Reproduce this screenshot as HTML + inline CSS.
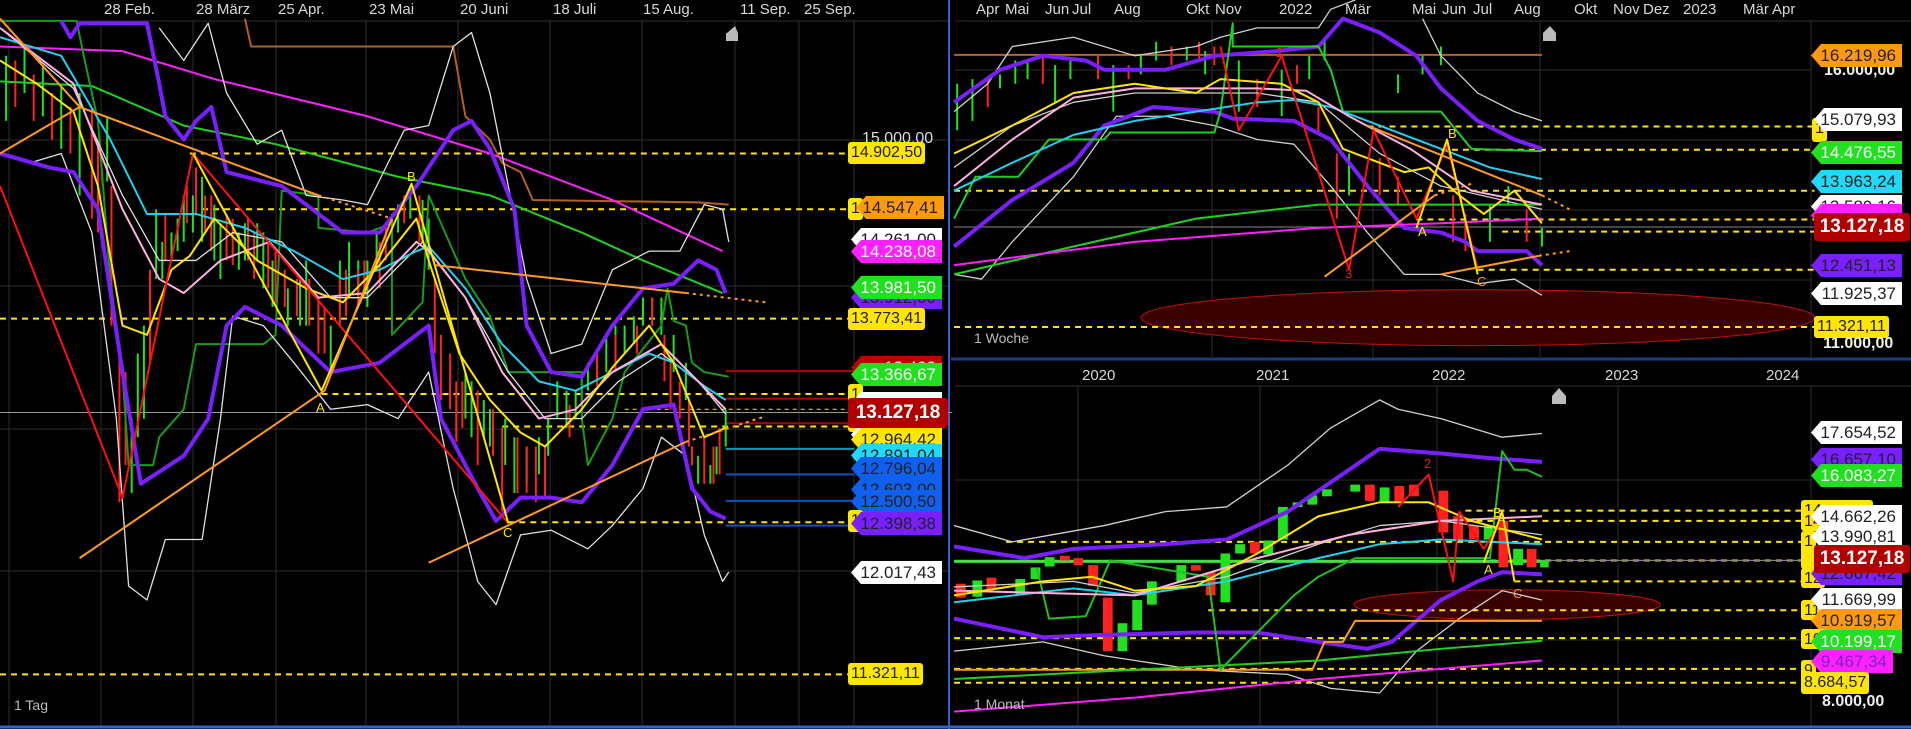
<!DOCTYPE html>
<html><head><meta charset="utf-8">
<style>
html,body{margin:0;padding:0;background:#000;}
body{width:1911px;height:729px;position:relative;overflow:hidden;font-family:"Liberation Sans Narrow","Liberation Sans",sans-serif;}
svg{position:absolute;left:0;top:0;}
.ax{position:absolute;color:#d8d8d8;font-size:15px;top:1px;white-space:nowrap;}
.lb{position:absolute;height:23px;line-height:23px;font-size:17px;text-align:right;padding-right:6px;box-sizing:border-box;clip-path:polygon(10px 0,100% 0,100% 100%,10px 100%,0 50%);white-space:nowrap;overflow:hidden;}
.yl{position:absolute;height:22px;line-height:22px;font-size:16px;background:#ffe600;color:#222;border-radius:3px;padding:0 3px;white-space:nowrap;}
.pl{position:absolute;font-size:16px;color:#eee;font-weight:bold;white-space:nowrap;}
.big{position:absolute;height:30px;line-height:30px;font-size:19px;font-weight:bold;color:#fff;background:#b00000;border-radius:3px;text-align:center;}
.tag{position:absolute;font-size:14px;color:#bbb;}
</style></head><body>
<svg width="1911" height="729" viewBox="0 0 1911 729">
<g stroke="#2e2e2e" stroke-width="1">
<line x1="0" y1="21" x2="949" y2="21"/>
<line x1="9" y1="21" x2="9" y2="727"/>
<line x1="101" y1="21" x2="101" y2="727"/><line x1="193" y1="21" x2="193" y2="727"/><line x1="276" y1="21" x2="276" y2="727"/><line x1="366" y1="21" x2="366" y2="727"/><line x1="458" y1="21" x2="458" y2="727"/><line x1="550" y1="21" x2="550" y2="727"/><line x1="642" y1="21" x2="642" y2="727"/><line x1="735" y1="21" x2="735" y2="727"/><line x1="799" y1="21" x2="799" y2="727"/><line x1="854" y1="21" x2="854" y2="727"/>
<line x1="0" y1="140" x2="949" y2="140"/><line x1="0" y1="286" x2="949" y2="286"/><line x1="0" y1="429" x2="949" y2="429"/><line x1="0" y1="571" x2="949" y2="571"/>
<line x1="955" y1="21" x2="1911" y2="21"/>
<line x1="1212" y1="21" x2="1212" y2="357"/><line x1="1373" y1="21" x2="1373" y2="357"/><line x1="1540" y1="21" x2="1540" y2="357"/><line x1="1811" y1="21" x2="1811" y2="357"/>
<line x1="955" y1="70" x2="1811" y2="70"/><line x1="955" y1="140" x2="1811" y2="140"/><line x1="955" y1="210" x2="1811" y2="210"/><line x1="955" y1="280" x2="1811" y2="280"/>
<line x1="955" y1="386" x2="1911" y2="386"/>
<line x1="1078" y1="386" x2="1078" y2="727"/><line x1="1260" y1="386" x2="1260" y2="727"/><line x1="1437" y1="386" x2="1437" y2="727"/><line x1="1618" y1="386" x2="1618" y2="727"/><line x1="1811" y1="386" x2="1811" y2="727"/>
<line x1="955" y1="480" x2="1811" y2="480"/><line x1="955" y1="560" x2="1811" y2="560"/><line x1="955" y1="640" x2="1811" y2="640"/>
</g>
<line x1="949" y1="0" x2="949" y2="729" stroke="#2a64d0" stroke-width="2"/>
<line x1="0" y1="727" x2="1911" y2="727" stroke="#2a64d0" stroke-width="3"/>
<line x1="951" y1="359" x2="1911" y2="359" stroke="#1a3d80" stroke-width="3"/>

<g transform="scale(0.6124,0.4651)" fill="none" stroke-linejoin="round">
<polyline vector-effect="non-scaling-stroke" stroke="#ffe600" stroke-width="2" stroke-dasharray="6,5" points="0,685 1385,685"/>
<polyline vector-effect="non-scaling-stroke" stroke="#ffe600" stroke-width="2" stroke-dasharray="6,5" points="310,330 1385,330"/>
<polyline vector-effect="non-scaling-stroke" stroke="#ffe600" stroke-width="2" stroke-dasharray="6,5" points="330,450 1385,450"/>
<polyline vector-effect="non-scaling-stroke" stroke="#ffe600" stroke-width="2" stroke-dasharray="6,5" points="525,847 1385,847"/>
<polyline vector-effect="non-scaling-stroke" stroke="#ffe600" stroke-width="2" stroke-dasharray="6,5" points="820,917 1385,917"/>
<polyline vector-effect="non-scaling-stroke" stroke="#ffe600" stroke-width="2" stroke-dasharray="6,5" points="830,1123 1385,1123"/>
<polyline vector-effect="non-scaling-stroke" stroke="#ffe600" stroke-width="2" stroke-dasharray="6,5" points="0,1450 1385,1450"/>
<polyline vector-effect="non-scaling-stroke" stroke="#ffe600" stroke-width="1" stroke-dasharray="4,4" points="1020,880 1385,880"/>
<polyline vector-effect="non-scaling-stroke" stroke="#999" stroke-width="1" points="0,887 1555,887"/>
<polyline vector-effect="non-scaling-stroke" stroke="#b00000" stroke-width="2" points="1185,798 1395,798"/>
<polyline vector-effect="non-scaling-stroke" stroke="#b00000" stroke-width="2" points="1185,857 1395,857"/>
<polyline vector-effect="non-scaling-stroke" stroke="#b00000" stroke-width="2" points="1185,910 1395,910"/>
<polyline vector-effect="non-scaling-stroke" stroke="#00a0b0" stroke-width="2" points="1185,965 1395,965"/>
<polyline vector-effect="non-scaling-stroke" stroke="#1050c0" stroke-width="2" points="1185,1020 1395,1020"/>
<polyline vector-effect="non-scaling-stroke" stroke="#1050c0" stroke-width="2" points="1185,1077 1395,1077"/>
<polyline vector-effect="non-scaling-stroke" stroke="#1050c0" stroke-width="2" points="1185,1130 1395,1130"/>
<path vector-effect="non-scaling-stroke" stroke-width="2" stroke="#20e020" d="M10,120V260 M40,100V200 M70,140V250 M100,180V320 M130,200V420 M175,250V390 M215,900V1060 M235,700V900 M255,450V600 M280,500V560 M300,420V520 M330,380V520 M360,480V600 M400,480V560 M430,500V620 M470,620V700 M500,560V700 M540,700V800 M570,520V640 M600,560V660 M640,460V560 M670,400V470 M700,470V580 M770,820V940 M800,880V960 M840,940V1060 M880,940V1020 M910,820V900 M940,840V900 M960,780V840 M990,720V800 M1020,700V760 M1050,640V700 M1080,640V720 M1120,780V860 M1160,1000V1040 M1185,880V960 M225,760V940 M265,520V600 M290,470V540 M315,420V500 M350,440V560 M390,500V580 M420,480V560 M445,560V660 M490,600V700 M520,640V740 M555,560V660 M585,560V640 M615,500V580 M650,440V500 M690,430V520 M760,800V900 M790,860V940 M825,900V1000 M860,960V1040 M895,900V980 M925,840V920 M950,800V880 M975,760V820 M1005,700V780 M1035,680V740 M1065,640V700 M1100,720V800 M1140,980V1040 M1170,960V1020"/>
<path vector-effect="non-scaling-stroke" stroke-width="2" stroke="#ff2020" d="M25,130V230 M55,160V260 M85,200V300 M115,230V330 M150,230V470 M195,740V1080 M245,580V780 M270,460V560 M320,360V460 M345,420V540 M380,470V570 M415,500V600 M450,540V650 M485,600V680 M520,640V760 M555,600V700 M585,580V660 M620,520V620 M685,420V520 M720,720V860 M745,820V950 M780,840V1000 M820,920V1100 M860,960V1060 M890,960V1070 M930,870V940 M975,760V830 M1005,720V800 M1040,700V760 M1065,640V700 M1095,780V880 M1110,820V900 M1130,960V1000 M1150,940V1040 M1175,920V1020 M160,300V500 M182,400V700 M205,800V1000 M305,400V480 M335,420V500 M370,460V560 M405,470V560 M438,520V620 M465,580V660 M505,600V700 M530,660V760 M565,580V680 M595,560V640 M630,480V560 M660,420V480 M710,600V760 M735,760V880 M755,820V920 M805,880V980 M845,940V1060 M875,960V1080 M1085,720V820 M1125,860V960 M1165,960V1040"/>
<polyline vector-effect="non-scaling-stroke" stroke="#b06020" stroke-width="2" points="400,40 410,100 740,100 760,250 800,300 820,350 850,370 870,430 1140,435 1190,440"/>
<polyline vector-effect="non-scaling-stroke" stroke="#ff20ff" stroke-width="2" points="0,100 200,110 350,170 600,250 800,330 1000,430 1180,540"/>
<polyline vector-effect="non-scaling-stroke" stroke="#20d020" stroke-width="2" points="0,175 150,185 300,270 450,310 650,380 800,420 950,500 1050,560 1180,630"/>
<polyline vector-effect="non-scaling-stroke" stroke="#1a9a1a" stroke-width="2" points="0,45 125,45 140,140 160,260 180,600 200,800 210,1000 250,1000 260,940 300,880 320,740 430,740 450,720 460,410 520,420 520,490 600,500 640,480 640,720 690,650 700,420 720,480 760,600 800,680 830,800 950,800 950,900 960,1000 1000,900 1020,800 1080,700 1090,620 1100,690 1120,700 1130,780 1150,800 1190,810"/>
<polyline vector-effect="non-scaling-stroke" stroke="#e0e0e0" stroke-width="1.3" points="260,60 300,130 340,50 370,200 420,310 460,280 500,420 560,430 600,440 660,280 700,270 740,100 770,70 800,200 830,400 860,600 900,760 950,740 1000,580 1060,540 1110,540 1150,440 1180,450 1190,520"/>
<polyline vector-effect="non-scaling-stroke" stroke="#e0e0e0" stroke-width="1.3" points="0,330 50,350 100,330 150,500 190,900 210,1260 240,1290 270,1160 330,1160 360,900 380,680 430,700 480,780 540,880 600,870 650,900 700,800 740,1050 780,1250 810,1300 850,1150 900,1140 960,1180 1000,1130 1050,1050 1080,940 1120,980 1150,1150 1180,1250 1190,1230"/>
<polyline vector-effect="non-scaling-stroke" stroke="#e0e0e0" stroke-width="1.3" points="0,60 120,190 200,420 260,560 320,560 380,500 460,520 540,640 600,640 690,520 760,640 830,800 890,900 950,900 1010,820 1080,760 1140,820 1185,890"/>
<polyline vector-effect="non-scaling-stroke" stroke="#7a1fff" stroke-width="4" points="100,45 115,80 130,50 240,50 260,180 270,250 300,300 320,260 345,230 370,370 460,400 520,460 560,500 620,500 680,400 740,280 770,260 800,320 840,450 860,700 900,800 950,810 1000,700 1050,620 1100,610 1140,560 1170,580 1185,630"/>
<polyline vector-effect="non-scaling-stroke" stroke="#7a1fff" stroke-width="4" points="0,330 80,360 120,370 160,450 200,800 230,1040 300,980 340,900 370,700 400,660 460,700 540,800 620,780 680,720 700,700 720,900 780,1050 810,1120 850,1070 900,1070 950,1080 1000,1000 1050,880 1100,870 1130,1050 1160,1100 1185,1115"/>
<polyline vector-effect="non-scaling-stroke" stroke="#20d0f0" stroke-width="2" points="0,80 100,120 180,300 240,460 320,460 400,490 480,540 560,600 620,580 680,540 700,530 760,620 820,740 880,820 940,840 1000,800 1060,760 1100,780 1150,830 1185,860"/>
<polyline vector-effect="non-scaling-stroke" stroke="#ffb0e0" stroke-width="2" points="0,60 120,180 200,450 260,600 300,630 360,560 440,520 520,640 600,630 680,520 700,540 760,640 820,800 880,900 940,880 1000,800 1080,740 1140,820 1185,880"/>
<polyline vector-effect="non-scaling-stroke" stroke="#ffe600" stroke-width="2" points="0,130 60,180 120,240 160,400 200,700 240,720 280,580 310,550 350,470 420,560 500,620 560,650 620,570 680,470 700,560 750,760 800,860 850,930 890,960 950,880 1000,790 1060,700 1100,780 1150,940 1185,920"/>
<polyline vector-effect="non-scaling-stroke" stroke="#ff1010" stroke-width="2" points="0,400 200,1070 315,330 830,1125"/>
<polyline vector-effect="non-scaling-stroke" stroke="#ffe600" stroke-width="2" points="315,330 525,840 672,395 830,1125"/>
<polyline vector-effect="non-scaling-stroke" stroke="#ff9a20" stroke-width="2" points="0,330 130,230"/>
<polyline vector-effect="non-scaling-stroke" stroke="#ff9a20" stroke-width="2" points="130,1200 530,840 640,470"/>
<polyline vector-effect="non-scaling-stroke" stroke="#ff9a20" stroke-width="2" points="0,40 130,230 520,420"/>
<polyline vector-effect="non-scaling-stroke" stroke="#ff9a20" stroke-width="2" stroke-dasharray="3,4" points="520,420 640,470"/>
<polyline vector-effect="non-scaling-stroke" stroke="#ff9a20" stroke-width="2" points="700,1210 1120,950"/>
<polyline vector-effect="non-scaling-stroke" stroke="#ff9a20" stroke-width="2" stroke-dasharray="3,4" points="1120,950 1250,895"/>
<polyline vector-effect="non-scaling-stroke" stroke="#ff9a20" stroke-width="2" points="710,570 1120,630"/>
<polyline vector-effect="non-scaling-stroke" stroke="#ff9a20" stroke-width="2" stroke-dasharray="3,4" points="1120,630 1250,650"/>
</g>
<polygon points="727,33 735,26 738,33" fill="#bbb"/><rect x="726" y="33" width="12" height="8" fill="#bbb"/>
<text x="316" y="412" fill="#ffe600" font-size="13" font-family="Liberation Sans">A</text>
<text x="407" y="181" fill="#ffe600" font-size="13" font-family="Liberation Sans">B</text>
<text x="503" y="537" fill="#ffe600" font-size="13" font-family="Liberation Sans">C</text>

<g transform="translate(951,0) scale(0.6124,0.4651)" fill="none" stroke-linejoin="round">
<ellipse vector-effect="non-scaling-stroke" cx="860" cy="683" rx="550" ry="60" fill="#3a0000" stroke="#c01010" stroke-width="1"/>
<polyline vector-effect="non-scaling-stroke" stroke="#c06020" stroke-width="2" points="5,118 965,118"/>
<g stroke="#ffe600" stroke-width="2" stroke-dasharray="6,5">
<polyline vector-effect="non-scaling-stroke" points="680,272 1410,272"/>
<polyline vector-effect="non-scaling-stroke" points="800,322 1410,322"/>
<polyline vector-effect="non-scaling-stroke" points="5,410 1410,410"/>
<polyline vector-effect="non-scaling-stroke" points="760,472 1410,472"/>
<polyline vector-effect="non-scaling-stroke" points="900,498 1410,498"/>
<polyline vector-effect="non-scaling-stroke" points="860,580 1410,580"/>
<polyline vector-effect="non-scaling-stroke" points="5,703 1410,703"/>
</g>
<polyline vector-effect="non-scaling-stroke" stroke="#888" stroke-width="1" points="5,488 1410,488"/>
<path vector-effect="non-scaling-stroke" stroke="#20e020" stroke-width="2" d="M10,180V280 M35,170V260 M80,160V190 M105,130V180 M125,130V170 M170,140V220 M195,130V170 M265,140V240 M310,120V160 M335,90V130 M385,100V130 M415,110V160 M470,130V240 M540,150V250 M585,120V170 M610,80V130 M650,330V420 M730,160V200 M770,120V160 M800,100V140 M880,440V520 M910,400V440 M965,490V530"/>
<path vector-effect="non-scaling-stroke" stroke="#ff2020" stroke-width="2" d="M60,170V230 M150,120V180 M240,120V170 M290,140V170 M360,100V140 M405,90V130 M430,100V140 M500,170V230 M565,140V180 M600,230V290 M630,330V470 M700,340V420 M730,380V440 M820,420V520 M840,460V540 M940,450V520"/>
<polyline vector-effect="non-scaling-stroke" stroke="#d0d0d0" stroke-width="1.3" points="5,240 60,180 100,100 200,80 300,120 400,100 440,80 500,60 600,60 620,20 660,0"/>
<polyline vector-effect="non-scaling-stroke" stroke="#d0d0d0" stroke-width="1.3" points="770,40 800,120 860,200 920,240 965,260"/>
<polyline vector-effect="non-scaling-stroke" stroke="#d0d0d0" stroke-width="1.3" points="5,590 50,600 100,520 200,380 270,250 350,250 430,270 500,300 560,310 620,400 680,500 740,590 800,590 860,610 920,600 965,635"/>
<polyline vector-effect="non-scaling-stroke" stroke="#d0d0d0" stroke-width="1.3" points="5,360 100,270 200,220 300,200 500,200 600,220 700,330 800,400 965,450"/>
<polyline vector-effect="non-scaling-stroke" stroke="#7a1fff" stroke-width="4" points="5,220 80,150 150,120 220,130 250,150 350,150 430,120 530,110 600,100 640,40 700,70 760,120 800,190 860,260 920,300 965,320"/>
<polyline vector-effect="non-scaling-stroke" stroke="#7a1fff" stroke-width="4" points="5,530 100,430 200,350 250,270 330,230 430,240 460,255 560,260 620,300 680,400 740,490 800,500 840,520 860,540 940,540 965,570"/>
<polyline vector-effect="non-scaling-stroke" stroke="#20d020" stroke-width="2" points="5,470 40,380 110,380 160,300 250,300 260,285 430,285 440,240 460,50 460,100 600,100 620,150 640,240 800,240 850,320 965,325"/>
<polyline vector-effect="non-scaling-stroke" stroke="#20d020" stroke-width="2" points="5,590 200,530 400,470 600,440 800,440 965,440"/>
<polyline vector-effect="non-scaling-stroke" stroke="#ff20ff" stroke-width="2" points="5,570 300,520 600,490 800,480 965,470"/>
<polyline vector-effect="non-scaling-stroke" stroke="#20d0f0" stroke-width="2" points="5,410 100,350 200,290 300,260 400,240 500,220 560,215 620,230 700,270 800,320 880,360 965,385"/>
<polyline vector-effect="non-scaling-stroke" stroke="#ffb0e0" stroke-width="2" points="5,400 100,300 200,210 300,190 500,190 580,195 650,250 750,320 850,410 965,440"/>
<polyline vector-effect="non-scaling-stroke" stroke="#ffe600" stroke-width="2" points="5,330 100,270 200,200 300,180 400,200 440,170 540,180 600,220 640,320 700,350 740,370 780,360 830,420 870,460 920,410 965,480"/>
<polyline vector-effect="non-scaling-stroke" stroke="#ff1010" stroke-width="2" points="440,100 470,280 540,120 650,580 690,280 760,470 810,310 860,580"/>
<polyline vector-effect="non-scaling-stroke" stroke="#ffe600" stroke-width="2" points="760,490 810,300 860,590"/>
<polyline vector-effect="non-scaling-stroke" stroke="#ff9a20" stroke-width="2" points="610,595 790,420"/>
<polyline vector-effect="non-scaling-stroke" stroke="#ff9a20" stroke-width="2" points="800,590 960,550"/>
<polyline vector-effect="non-scaling-stroke" stroke="#ff9a20" stroke-width="2" points="680,270 965,420"/>
<polyline vector-effect="non-scaling-stroke" stroke="#ff9a20" stroke-width="2" stroke-dasharray="3,4" points="790,420 850,395"/>
<polyline vector-effect="non-scaling-stroke" stroke="#ff9a20" stroke-width="2" stroke-dasharray="3,4" points="960,550 1010,540"/>
<polyline vector-effect="non-scaling-stroke" stroke="#ff9a20" stroke-width="2" stroke-dasharray="3,4" points="965,420 1010,450"/>
</g>
<polygon points="1543,33 1550,26 1556,33" fill="#bbb"/><rect x="1543" y="33" width="13" height="8" fill="#bbb"/>
<text x="1276" y="57" fill="#e02020" font-size="13" font-family="Liberation Sans">2</text>
<text x="1345" y="278" fill="#e02020" font-size="13" font-family="Liberation Sans">3</text>
<text x="1418" y="236" fill="#ffe600" font-size="13" font-family="Liberation Sans">A</text>
<text x="1448" y="138" fill="#ffe600" font-size="13" font-family="Liberation Sans">B</text>
<text x="1477" y="286" fill="#ff9a20" font-size="13" font-family="Liberation Sans">C</text>

<g transform="translate(951,0) scale(0.6124,0.4651)" fill="none" stroke-linejoin="round">
<ellipse vector-effect="non-scaling-stroke" cx="908" cy="1300" rx="250" ry="32" fill="#3a0000" stroke="#c01010" stroke-width="1"/>
<g stroke="#ffe600" stroke-width="2" stroke-dasharray="6,5">
<polyline vector-effect="non-scaling-stroke" points="840,1098 1390,1098"/>
<polyline vector-effect="non-scaling-stroke" points="840,1120 1390,1120"/>
<polyline vector-effect="non-scaling-stroke" points="90,1165 1390,1165"/>
<polyline vector-effect="non-scaling-stroke" points="880,1205 1390,1205"/>
<polyline vector-effect="non-scaling-stroke" points="920,1250 1390,1250"/>
<polyline vector-effect="non-scaling-stroke" points="420,1312 1390,1312"/>
<polyline vector-effect="non-scaling-stroke" points="5,1372 1390,1372"/>
<polyline vector-effect="non-scaling-stroke" points="5,1438 1390,1438"/>
<polyline vector-effect="non-scaling-stroke" points="5,1468 1390,1468"/>
</g>
<polyline vector-effect="non-scaling-stroke" stroke="#888" stroke-width="1" points="5,1205 1390,1205"/>
<polyline vector-effect="non-scaling-stroke" stroke="#40e040" stroke-width="3" points="5,1207 965,1207"/>
<g stroke-width="1">
<rect x="8" y="1255" width="16" height="30" fill="#ff2020"/><rect x="35" y="1248" width="16" height="35" fill="#20e020"/><rect x="58" y="1242" width="16" height="25" fill="#ff2020"/><rect x="105" y="1245" width="16" height="32" fill="#20e020"/><rect x="130" y="1220" width="16" height="25" fill="#20e020"/><rect x="153" y="1198" width="16" height="20" fill="#20e020"/><rect x="178" y="1195" width="16" height="10" fill="#ff2020"/><rect x="200" y="1200" width="16" height="15" fill="#ff2020"/><rect x="224" y="1215" width="16" height="45" fill="#ff2020"/><rect x="248" y="1285" width="16" height="115" fill="#ff2020"/><rect x="272" y="1340" width="16" height="60" fill="#20e020"/><rect x="296" y="1290" width="16" height="65" fill="#20e020"/><rect x="320" y="1250" width="16" height="50" fill="#20e020"/><rect x="368" y="1215" width="16" height="35" fill="#20e020"/><rect x="392" y="1215" width="16" height="12" fill="#ff2020"/><rect x="416" y="1230" width="16" height="50" fill="#ff2020"/><rect x="440" y="1190" width="16" height="105" fill="#20e020"/><rect x="464" y="1170" width="16" height="20" fill="#20e020"/><rect x="488" y="1165" width="16" height="25" fill="#ff2020"/><rect x="510" y="1162" width="16" height="30" fill="#20e020"/><rect x="534" y="1090" width="16" height="70" fill="#20e020"/><rect x="558" y="1080" width="16" height="10" fill="#20e020"/><rect x="582" y="1065" width="16" height="20" fill="#20e020"/><rect x="606" y="1052" width="16" height="15" fill="#20e020"/><rect x="652" y="1042" width="16" height="15" fill="#20e020"/><rect x="676" y="1042" width="16" height="35" fill="#ff2020"/><rect x="700" y="1048" width="16" height="30" fill="#20e020"/><rect x="724" y="1045" width="16" height="35" fill="#ff2020"/><rect x="748" y="1042" width="16" height="25" fill="#ff2020"/><rect x="796" y="1055" width="16" height="90" fill="#ff2020"/><rect x="820" y="1110" width="16" height="50" fill="#ff2020"/><rect x="846" y="1130" width="16" height="30" fill="#ff2020"/><rect x="870" y="1130" width="16" height="30" fill="#20e020"/><rect x="894" y="1120" width="16" height="100" fill="#ff2020"/><rect x="918" y="1180" width="16" height="35" fill="#20e020"/><rect x="940" y="1180" width="16" height="40" fill="#ff2020"/><rect x="962" y="1205" width="14" height="15" fill="#20e020"/>
</g>
<polyline vector-effect="non-scaling-stroke" stroke="#d0d0d0" stroke-width="1.3" points="5,1130 100,1165 250,1130 350,1100 450,1090 550,1000 620,920 700,860 730,880 800,900 900,940 965,932"/>
<polyline vector-effect="non-scaling-stroke" stroke="#d0d0d0" stroke-width="1.3" points="5,1400 150,1380 250,1410 400,1440 550,1450 620,1480 700,1490 760,1400 830,1330 900,1270 965,1290"/>
<polyline vector-effect="non-scaling-stroke" stroke="#d0d0d0" stroke-width="1.3" points="5,1262 200,1250 300,1275 450,1240 600,1170 700,1130 800,1120 965,1150"/>
<polyline vector-effect="non-scaling-stroke" stroke="#7a1fff" stroke-width="4" points="5,1175 120,1200 200,1180 350,1170 450,1160 550,1100 700,965 800,975 880,985 965,993"/>
<polyline vector-effect="non-scaling-stroke" stroke="#7a1fff" stroke-width="4" points="5,1330 150,1370 250,1365 400,1360 500,1360 600,1380 680,1395 720,1380 800,1290 860,1250 900,1230 965,1235"/>
<polyline vector-effect="non-scaling-stroke" stroke="#ff9a20" stroke-width="2" points="5,1440 590,1440 610,1380 640,1380 660,1335 965,1335"/>
<polyline vector-effect="non-scaling-stroke" stroke="#20d020" stroke-width="2" points="5,1460 300,1440 600,1420 800,1395 965,1378"/>
<polyline vector-effect="non-scaling-stroke" stroke="#ff20ff" stroke-width="2" points="5,1530 300,1500 600,1460 965,1420"/>
<polyline vector-effect="non-scaling-stroke" stroke="#20c020" stroke-width="2" points="140,1220 160,1330 220,1325 260,1205 420,1240 440,1440 500,1360 560,1280 600,1240 660,1200 880,1200 900,970 920,1010 940,1010 965,1025"/>
<polyline vector-effect="non-scaling-stroke" stroke="#20d0f0" stroke-width="2" points="5,1295 200,1265 300,1280 450,1250 600,1200 700,1170 800,1160 965,1170"/>
<polyline vector-effect="non-scaling-stroke" stroke="#ffb0e0" stroke-width="2" points="5,1270 300,1280 500,1200 650,1150 800,1120 965,1110"/>
<polyline vector-effect="non-scaling-stroke" stroke="#ffe600" stroke-width="2" points="5,1280 150,1250 230,1240 300,1270 400,1260 500,1190 600,1110 700,1080 780,1080 850,1120 965,1160"/>
<polyline vector-effect="non-scaling-stroke" stroke="#ff1010" stroke-width="2" points="730,1090 780,1020 820,1250 830,1100 870,1180 900,1120"/>
<polyline vector-effect="non-scaling-stroke" stroke="#ffe600" stroke-width="2" points="870,1210 900,1100 920,1250"/>
</g>
<polygon points="1552,396 1559,388 1566,396" fill="#bbb"/><rect x="1552" y="396" width="14" height="8" fill="#bbb"/>
<text x="1424" y="468" fill="#e02020" font-size="13" font-family="Liberation Sans">2</text>
<text x="1493" y="517" fill="#ffe600" font-size="13" font-family="Liberation Sans">B</text>
<text x="1484" y="574" fill="#ffe600" font-size="13" font-family="Liberation Sans">A</text>
<text x="1513" y="598" fill="#ff9a20" font-size="13" font-family="Liberation Sans">C</text>
</svg>

<div class="ax" style="left:104px">28 Feb.</div>
<div class="ax" style="left:196px">28 März</div>
<div class="ax" style="left:278px">25 Apr.</div>
<div class="ax" style="left:369px">23 Mai</div>
<div class="ax" style="left:460px">20 Juni</div>
<div class="ax" style="left:553px">18 Juli</div>
<div class="ax" style="left:643px">15 Aug.</div>
<div class="ax" style="left:740px">11 Sep.</div>
<div class="ax" style="left:804px">25 Sep.</div>
<div class="tag" style="left:14px;top:697px">1 Tag</div>

<div class="pl" style="left:862px;top:130px;color:#ddd;font-weight:normal">15.000,00</div>
<div class="yl" style="left:848px;top:142px">14.902,50</div>
<div class="yl" style="left:848px;top:198px">1</div>
<div class="lb" style="left:856px;top:196px;width:88px;background:#ff9a10;color:#222">14.547,41</div>
<div class="lb" style="left:851px;top:228px;width:91px;background:#fff;color:#222">14.261,00</div>
<div class="lb" style="left:851px;top:240px;width:91px;background:#ff20ff;color:#fff">14.238,08</div>
<div class="lb" style="left:851px;top:286px;width:91px;background:#7a1fff;color:#222">13.912,00</div>
<div class="lb" style="left:851px;top:276px;width:91px;background:#20e020;color:#fff">13.981,50</div>
<div class="yl" style="left:848px;top:308px">13.773,41</div>
<div class="lb" style="left:851px;top:356px;width:91px;background:#c00000;color:#fff">13.400</div>
<div class="lb" style="left:851px;top:363px;width:91px;background:#20e020;color:#fff">13.366,67</div>
<div class="yl" style="left:848px;top:384px;height:48px">1</div>
<div class="lb" style="left:851px;top:392px;width:91px;background:#fff;color:#222"> </div>
<div class="lb" style="left:851px;top:423px;width:91px;background:#fff;color:#222"> </div>
<div class="lb" style="left:851px;top:428px;width:91px;background:#ffe600;color:#222">12.964,42</div>
<div class="lb" style="left:851px;top:444px;width:91px;background:#20d8f8;color:#222">12.891,04</div>
<div class="lb" style="left:851px;top:457px;width:91px;background:#1060f0;color:#222">12.796,04</div>
<div class="lb" style="left:851px;top:478px;width:91px;background:#1060f0;color:#222">12.603,00</div>
<div class="lb" style="left:851px;top:490px;width:91px;background:#1060f0;color:#222">12.500,50</div>
<div class="yl" style="left:848px;top:510px">1</div>
<div class="lb" style="left:851px;top:512px;width:91px;background:#7a1fff;color:#222">12.398,38</div>
<div class="big" style="left:848px;top:398px;width:100px">13.127,18</div>
<div class="lb" style="left:851px;top:561px;width:91px;background:#fff;color:#222">12.017,43</div>
<div class="yl" style="left:848px;top:663px">11.321,11</div>

<div class="ax" style="left:976px">Apr</div><div class="ax" style="left:1005px">Mai</div><div class="ax" style="left:1045px">Jun</div><div class="ax" style="left:1072px">Jul</div><div class="ax" style="left:1114px">Aug</div><div class="ax" style="left:1186px">Okt</div><div class="ax" style="left:1215px">Nov</div><div class="ax" style="left:1279px">2022</div><div class="ax" style="left:1345px">Mär</div><div class="ax" style="left:1412px">Mai</div><div class="ax" style="left:1442px">Jun</div><div class="ax" style="left:1473px">Jul</div><div class="ax" style="left:1514px">Aug</div><div class="ax" style="left:1574px">Okt</div><div class="ax" style="left:1613px">Nov</div><div class="ax" style="left:1643px">Dez</div><div class="ax" style="left:1683px">2023</div><div class="ax" style="left:1743px">Mär</div><div class="ax" style="left:1772px">Apr</div>
<div class="tag" style="left:974px;top:330px">1 Woche</div>
<div class="pl" style="left:1824px;top:62px;">16.000,00</div>
<div class="lb" style="left:1811px;top:44px;width:91px;background:#ff9a10;color:#222">16.219,96</div>
<div class="yl" style="left:1812px;top:118px;height:24px">1</div>
<div class="lb" style="left:1814px;top:108px;width:88px;background:#fff;color:#222">15.079,93</div>
<div class="lb" style="left:1811px;top:141px;width:91px;background:#7a1fff;color:#222"> </div>
<div class="lb" style="left:1811px;top:141px;width:91px;background:#20e020;color:#fff">14.476,55</div>
<div class="lb" style="left:1811px;top:170px;width:91px;background:#20d8f8;color:#222">13.963,24</div>
<div class="lb" style="left:1811px;top:195px;width:91px;background:#fff;color:#222">13.589,16</div>
<div class="lb" style="left:1811px;top:204px;width:91px;background:#ff20ff;color:#fff"> </div>
<div class="big" style="left:1814px;top:213px;width:96px;height:28px;line-height:28px">13.127,18</div>
<div class="lb" style="left:1811px;top:254px;width:91px;background:#7a1fff;color:#222">12.451,13</div>
<div class="lb" style="left:1811px;top:282px;width:91px;background:#fff;color:#222">11.925,37</div>
<div class="yl" style="left:1814px;top:316px">11.321,11</div>
<div class="pl" style="left:1823px;top:335px;">11.000,00</div>

<div class="ax" style="left:1082px;top:367px">2020</div>
<div class="ax" style="left:1256px;top:367px">2021</div>
<div class="ax" style="left:1432px;top:367px">2022</div>
<div class="ax" style="left:1605px;top:367px">2023</div>
<div class="ax" style="left:1766px;top:367px">2024</div>
<div class="tag" style="left:974px;top:696px">1 Monat</div>
<div class="lb" style="left:1811px;top:421px;width:91px;background:#fff;color:#222">17.654,52</div>
<div class="lb" style="left:1811px;top:448px;width:91px;background:#7a1fff;color:#222">16.657,10</div>
<div class="lb" style="left:1811px;top:464px;width:91px;background:#20e020;color:#fff">16.083,27</div>
<div class="yl" style="left:1801px;top:500px;width:66px;height:20px">14</div>
<div class="yl" style="left:1801px;top:511px;height:20px">14</div>
<div class="lb" style="left:1811px;top:505px;width:91px;background:#fff;color:#222">14.662,26</div>
<div class="yl" style="left:1801px;top:531px;height:38px">1</div>
<div class="lb" style="left:1811px;top:525px;width:91px;background:#fff;color:#222">13.990,81</div>
<div class="yl" style="left:1801px;top:568px;height:20px">12</div>
<div class="lb" style="left:1811px;top:562px;width:91px;background:#7a1fff;color:#222">12.667,42</div>
<div class="big" style="left:1814px;top:545px;width:96px;height:28px;line-height:28px">13.127,18</div>
<div class="yl" style="left:1801px;top:600px;height:20px">11</div>
<div class="lb" style="left:1811px;top:588px;width:91px;background:#fff;color:#222">11.669,99</div>
<div class="lb" style="left:1811px;top:609px;width:91px;background:#ff9a10;color:#222">10.919,57</div>
<div class="yl" style="left:1801px;top:629px;height:20px">10</div>
<div class="lb" style="left:1811px;top:630px;width:91px;background:#20e020;color:#fff">10.199,17</div>
<div class="yl" style="left:1801px;top:660px;height:20px">9</div>
<div class="lb" style="left:1811px;top:650px;width:82px;background:#ff20ff;color:#8020c0">9.467,34</div>
<div class="yl" style="left:1801px;top:672px">8.684,57</div>
<div class="pl" style="left:1822px;top:693px;">8.000,00</div>
</body></html>
